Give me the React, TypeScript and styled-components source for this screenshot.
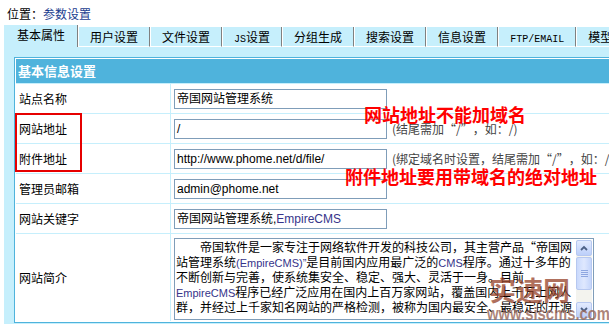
import styled, { createGlobalStyle } from 'styled-components';

const CYAN = '#c6effc';
const BLUE = '#4fb3dc';
const FIELD_BORDER = '#7f9db9';

const GlobalStyle = createGlobalStyle`
  html, body {
    margin: 0;
    padding: 0;
    background: #fff;
    overflow: hidden;
  }
  body {
    font-family: "Noto Sans CJK SC", "Liberation Sans", sans-serif;
    font-size: 12px;
    color: #000;
  }
`;

const Page = styled.div`
  position: relative;
  width: 1000px;
  height: 324px;
  padding-left: 4px;
  box-sizing: border-box;
`;

const Breadcrumb = styled.div`
  height: 25px;
  padding-left: 3px;
  line-height: 27px;
`;

const Crumb = styled.span`
  color: #1a3d8f;
`;

const TabBar = styled.div`
  display: flex;
  align-items: flex-end;
  height: 22px;
`;

const Tab = styled.div<{ $active?: boolean }>`
  box-sizing: border-box;
  white-space: nowrap;
  background: ${CYAN};
  border-right: 1px solid #808080;
  ${({ $active }) =>
    $active
      ? `
    height: 22px;
    padding: 2px 12px 0 13px;
    line-height: 15px;
  `
      : `
    height: 20px;
    padding: 0 11px;
    line-height: 19px;
    border-left: 1px solid #fff;
    border-bottom: 1px solid #fff;
  `}
`;

const Mono = styled.span`
  font-family: "Liberation Mono", monospace;
  font-size: 10px;
`;

const Main = styled.div`
  background: ${CYAN};
  padding: 10px 0 0 10px;
  height: 277px;
`;

const Panel = styled.div`
  position: relative;
  width: 900px;
  border: 1px solid ${BLUE};
  padding: 1px;
  background: #fff;
`;

const FormGrid = styled.div`
  display: grid;
  grid-template-columns: 154px 1fr;
  grid-template-rows: 24px repeat(5, 29px) 87px;
  gap: 1px;
  background: ${CYAN};
`;

const HeaderCell = styled.div`
  grid-column: 1 / -1;
  background: ${BLUE};
  color: #fff;
  font-weight: bold;
  font-size: 13px;
  line-height: 24px;
  padding-left: 2px;
`;

const LabelCell = styled.div`
  background: #fff;
  padding-left: 3px;
  display: flex;
  align-items: center;
`;

const ValueCell = styled.div<{ $top?: boolean }>`
  background: #fff;
  padding-left: 3px;
  display: flex;
  align-items: ${({ $top }) => ($top ? 'flex-start' : 'center')};
  padding-top: ${({ $top }) => ($top ? '4px' : '0')};
  gap: 5px;
`;

const Field = styled.div`
  box-sizing: border-box;
  width: 213px;
  height: 20px;
  border: 1px solid ${FIELD_BORDER};
  padding: 0 2px;
  line-height: 18px;
  white-space: nowrap;
  overflow: hidden;
  font-family: "Liberation Sans", "Noto Sans CJK SC", sans-serif;
  font-size: 12px;
`;

const Latin = styled.span<{ $tint?: boolean; $small?: boolean }>`
  font-family: "Liberation Sans", sans-serif;
  font-size: ${({ $small }) => ($small ? '11px' : 'inherit')};
  color: ${({ $tint }) => ($tint ? '#36348a' : 'inherit')};
`;

const Hint = styled.span`
  color: #444;
  white-space: nowrap;
`;

/* full-width curly quote, as the CJK system font sets it */
const Quote = styled.span<{ $open?: boolean }>`
  display: inline-block;
  width: 12px;
  text-align: ${({ $open }) => ($open ? 'right' : 'left')};
`;

const TextBox = styled.div`
  box-sizing: border-box;
  width: 420px;
  height: 82px;
  border: 1px solid ${FIELD_BORDER};
  display: flex;
`;

const TextBody = styled.div`
  flex: 1;
  padding: 1px 0 1px 1px;
  line-height: 14.5px;
  white-space: pre;
  overflow: hidden;
`;

const ScrollBar = styled.div`
  width: 16px;
  margin: 1px 1px 1px 0;
  display: flex;
  flex-direction: column;
  background: #f3f3ee;
`;

const ScrollButton = styled.div`
  box-sizing: border-box;
  height: 16px;
  border: 1px solid #b7c8f0;
  border-radius: 2px;
  background: linear-gradient(#e3ebfe, #bccffa);
  display: flex;
  align-items: center;
  justify-content: center;
`;

const Thumb = styled.div`
  box-sizing: border-box;
  height: 33px;
  margin-top: 1px;
  border: 1px solid #b7c8f0;
  border-radius: 2px;
  background: linear-gradient(90deg, #c9d9fc, #dfe8fe 50%, #c4d5fb);
  display: flex;
  flex-direction: column;
  align-items: center;
  justify-content: center;
  gap: 1px;
`;

const Grip = styled.div`
  width: 7px;
  height: 1px;
  background: #8ea6e0;
`;

const Track = styled.div`
  flex: 1;
`;

const RedBox = styled.div`
  position: absolute;
  left: 0;
  top: 55px;
  width: 67px;
  height: 59px;
  box-sizing: border-box;
  border: 2px solid #e60000;
`;

const Note = styled.div<{ $left: number; $top: number }>`
  position: absolute;
  left: ${({ $left }) => $left}px;
  top: ${({ $top }) => $top}px;
  color: #ff0000;
  font-weight: bold;
  font-size: 18px;
  line-height: 18px;
  white-space: nowrap;
`;

const Watermark = styled.div`
  position: absolute;
  left: 487px;
  top: 276px;
  color: rgba(150, 65, 40, 0.75);
  font-weight: bold;
  pointer-events: none;
`;

const WatermarkTitle = styled.div`
  font-size: 27px;
  line-height: 28px;
  padding-left: 2px;
`;

const WatermarkUrl = styled.div`
  font-family: "Liberation Sans", sans-serif;
  font-size: 19px;
  line-height: 20px;
  transform: scaleX(0.78);
  transform-origin: left;
  color: rgba(150, 100, 85, 0.78);
`;

const Arrow = ({ up }: { up?: boolean }) => (
  <svg width="8" height="6" viewBox="0 0 8 6">
    <path
      d={up ? 'M1 5 L4 2 L7 5' : 'M1 1 L4 4 L7 1'}
      fill="none"
      stroke="#4d6185"
      strokeWidth="1.8"
    />
  </svg>
);

const Scroller = () => (
  <ScrollBar>
    <ScrollButton>
      <Arrow up />
    </ScrollButton>
    <Thumb>
      <Grip />
      <Grip />
      <Grip />
      <Grip />
    </Thumb>
    <Track />
    <ScrollButton>
      <Arrow />
    </ScrollButton>
  </ScrollBar>
);

const INDENT = '\u3000\u3000';

export default function App() {
  return (
    <>
      <GlobalStyle />
      <Page>
        <Breadcrumb>
          位置：<Crumb>参数设置</Crumb>
        </Breadcrumb>

        <TabBar>
          <Tab $active>基本属性</Tab>
          <Tab>用户设置</Tab>
          <Tab>文件设置</Tab>
          <Tab>
            <Mono>JS</Mono>设置
          </Tab>
          <Tab>分组生成</Tab>
          <Tab>搜索设置</Tab>
          <Tab>信息设置</Tab>
          <Tab>
            <Mono>FTP/EMAIL</Mono>
          </Tab>
          <Tab>模型设置</Tab>
        </TabBar>

        <Main>
          <Panel>
            <FormGrid>
              <HeaderCell>基本信息设置</HeaderCell>

              <LabelCell>站点名称</LabelCell>
              <ValueCell>
                <Field>帝国网站管理系统</Field>
              </ValueCell>

              <LabelCell>网站地址</LabelCell>
              <ValueCell>
                <Field>/</Field>
                <Hint>
                  (结尾需加<Quote $open>“</Quote>/<Quote>”</Quote>，如：/)
                </Hint>
              </ValueCell>

              <LabelCell>附件地址</LabelCell>
              <ValueCell>
                <Field>http://www.phome.net/d/file/</Field>
                <Hint>
                  (绑定域名时设置，结尾需加<Quote $open>“</Quote>/<Quote>”</Quote>，如：/)
                </Hint>
              </ValueCell>

              <LabelCell>管理员邮箱</LabelCell>
              <ValueCell>
                <Field>admin@phome.net</Field>
              </ValueCell>

              <LabelCell>网站关键字</LabelCell>
              <ValueCell>
                <Field>
                  帝国网站管理系统,<Latin $tint>EmpireCMS</Latin>
                </Field>
              </ValueCell>

              <LabelCell>网站简介</LabelCell>
              <ValueCell $top>
                <TextBox>
                  <TextBody>
                    <div>
                      {INDENT}帝国软件是一家专注于网络软件开发的科技公司，其主营产品<Quote $open>“</Quote>帝国网
                    </div>
                    <div>
                      站管理系统<Latin $tint $small>(EmpireCMS)”</Latin>是目前国内应用最广泛的
                      <Latin $tint $small>CMS</Latin>程序。通过十多年的
                    </div>
                    <div>不断创新与完善，使系统集安全、稳定、强大、灵活于一身。目前</div>
                    <div>
                      <Latin $tint $small>EmpireCMS</Latin>程序已经广泛应用在国内上百万家网站，覆盖国内上千万上网人
                    </div>
                    <div>群，并经过上千家知名网站的严格检测，被称为国内最安全、最稳定的开源</div>
                  </TextBody>
                  <Scroller />
                </TextBox>
              </ValueCell>
            </FormGrid>

            <RedBox />
            <Note $left={349} $top={47}>网站地址不能加域名</Note>
            <Note $left={330} $top={109}>附件地址要用带域名的绝对地址</Note>
          </Panel>
        </Main>

        <Watermark>
          <WatermarkTitle>实速网</WatermarkTitle>
          <WatermarkUrl>www.siscms.com</WatermarkUrl>
        </Watermark>
      </Page>
    </>
  );
}
